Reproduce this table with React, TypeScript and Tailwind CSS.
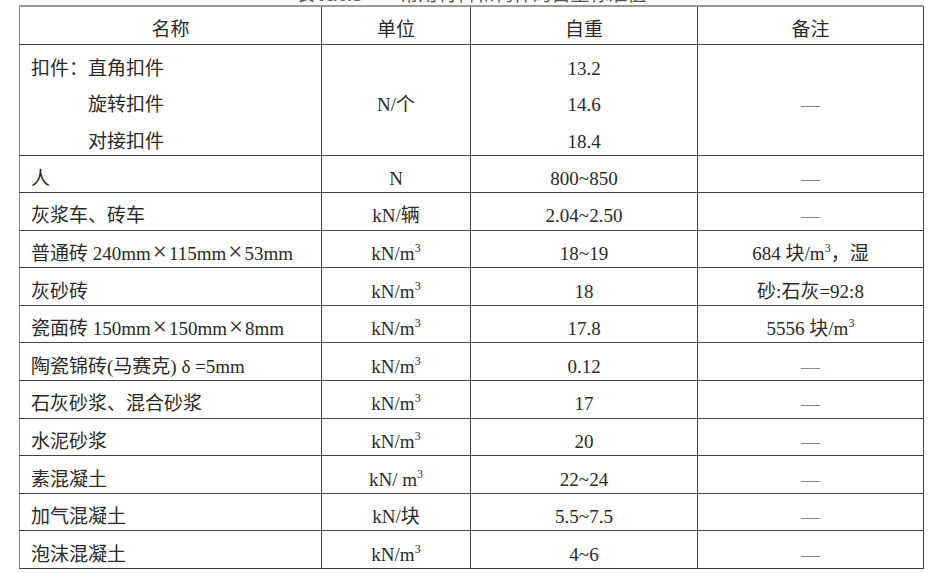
import React from "react";

const font = { fontFamily: '"Liberation Serif", "Noto Sans CJK SC", serif' };

function X() {
  return <span className="mx-[2px] text-[25px] leading-[0]">×</span>;
}

function Sup() {
  return <sup className="text-[12px] top-[-8px]">3</sup>;
}

function Cube({ pre }: { pre: string }) {
  return (
    <span>
      {pre}
      <Sup />
    </span>
  );
}

function Dash() {
  return <span className="text-[#8a8a8a]">—</span>;
}

type Row = { name: React.ReactNode; unit: React.ReactNode; w: string; note: React.ReactNode };

const rows: Row[] = [
  { name: "人", unit: "N", w: "800~850", note: <Dash /> },
  { name: "灰浆车、砖车", unit: "kN/辆", w: "2.04~2.50", note: <Dash /> },
  {
    name: (
      <span>
        普通砖 240mm<X />115mm<X />53mm
      </span>
    ),
    unit: <Cube pre="kN/m" />,
    w: "18~19",
    note: (
      <span>
        684 块/m<Sup />，湿
      </span>
    ),
  },
  { name: "灰砂砖", unit: <Cube pre="kN/m" />, w: "18", note: "砂:石灰=92:8" },
  {
    name: (
      <span>
        瓷面砖 150mm<X />150mm<X />8mm
      </span>
    ),
    unit: <Cube pre="kN/m" />,
    w: "17.8",
    note: (
      <span>
        5556 块/m<Sup />
      </span>
    ),
  },
  { name: "陶瓷锦砖(马赛克) δ =5mm", unit: <Cube pre="kN/m" />, w: "0.12", note: <Dash /> },
  { name: "石灰砂浆、混合砂浆", unit: <Cube pre="kN/m" />, w: "17", note: <Dash /> },
  { name: "水泥砂浆", unit: <Cube pre="kN/m" />, w: "20", note: <Dash /> },
  { name: "素混凝土", unit: <Cube pre="kN/ m" />, w: "22~24", note: <Dash /> },
  { name: "加气混凝土", unit: "kN/块", w: "5.5~7.5", note: <Dash /> },
  { name: "泡沫混凝土", unit: <Cube pre="kN/m" />, w: "4~6", note: <Dash /> },
];

const cell = "border border-[#444] align-middle pt-[10px] leading-[22px]";

export default function App() {
  return (
    <div className="w-[930px] h-[573px] bg-white overflow-hidden text-[19px] text-[#2a2a2a]" style={font}>
      <div className="h-[5px] overflow-hidden flex justify-center">
        <div className="leading-[19px] mt-[-15px] text-[#555] whitespace-pre pl-[12px]">
          表 A.0.1　　常用材料和构件的自重标准值
        </div>
      </div>
      <table className="ml-[19px] w-[904px] table-fixed border-collapse">
        <colgroup>
          <col className="w-[302px]" />
          <col className="w-[149px]" />
          <col className="w-[227px]" />
          <col className="w-[226px]" />
        </colgroup>
        <tbody>
          <tr className="h-[38px]">
            <td className={`${cell} border-t-2 border-t-[#999] border-l-[#888] text-center`}>名称</td>
            <td className={`${cell} border-t-2 border-t-[#999] text-center`}>单位</td>
            <td className={`${cell} border-t-2 border-t-[#999] text-center`}>自重</td>
            <td className={`${cell} border-t-2 border-t-[#999] text-center`}>备注</td>
          </tr>
          <tr className="h-[111px]">
            <td className={`${cell} border-l-[#888] pl-[11px]`}>
              <div className="flex flex-col gap-[14.5px] leading-[22px] pt-[1px]">
                <div>扣件：直角扣件</div>
                <div className="pl-[57px]">旋转扣件</div>
                <div className="pl-[57px]">对接扣件</div>
              </div>
            </td>
            <td className={`${cell} text-center`}>N/个</td>
            <td className={`${cell} text-center`}>
              <div className="flex flex-col gap-[14.5px] leading-[22px] pt-[1px]">
                <div>13.2</div>
                <div>14.6</div>
                <div>18.4</div>
              </div>
            </td>
            <td className={`${cell} text-center`}>
              <Dash />
            </td>
          </tr>
          {rows.map((r, i) => (
            <tr key={i} className="h-[37.6px]">
              <td className={`${cell} border-l-[#888] pl-[11px] whitespace-nowrap`}>{r.name}</td>
              <td className={`${cell} text-center whitespace-nowrap`}>{r.unit}</td>
              <td className={`${cell} text-center`}>{r.w}</td>
              <td className={`${cell} text-center whitespace-nowrap`}>{r.note}</td>
            </tr>
          ))}
        </tbody>
      </table>
    </div>
  );
}
